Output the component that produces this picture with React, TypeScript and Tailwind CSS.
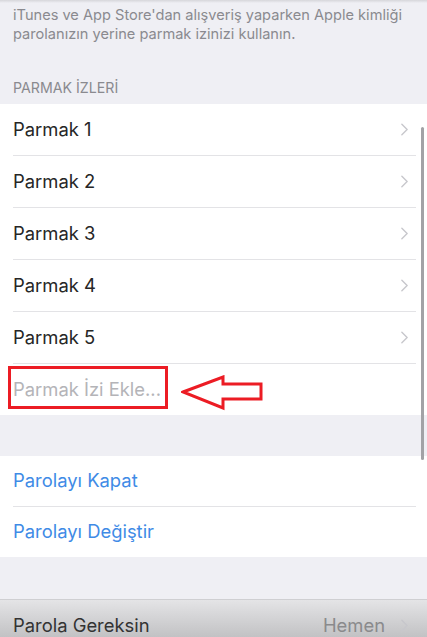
import { ReactNode } from 'react';

const font = { fontFamily: 'Inter, "Noto Sans", sans-serif' };

function Chevron({ className = '' }: { className?: string }) {
  return (
    <svg viewBox="0 0 8 14" className={`w-[7px] h-[13px] ${className}`} fill="none">
      <path d="M1 1l6 6-6 6" stroke="#c7c7cc" strokeWidth="1.6" strokeLinecap="round" strokeLinejoin="round" />
    </svg>
  );
}

function Row({ children, last = false, h = 'h-[52px]' }: { children: ReactNode; last?: boolean; h?: string }) {
  return (
    <div className={`${h} pl-[13px] flex`}>
      <div className={`flex-1 flex items-center mr-[11px] pr-[8px] ${last ? '' : 'border-b border-[#e3e3e6]'}`}>
        {children}
      </div>
    </div>
  );
}

export default function App() {
  const fingers = ['Parmak 1', 'Parmak 2', 'Parmak 3', 'Parmak 4', 'Parmak 5'];

  return (
    <div className="relative w-[427px] h-[637px] overflow-hidden bg-[#efeff4]" style={font}>
      <div className="h-[3px] bg-gradient-to-b from-[#d6d6da] to-[#efeff4]" />
      <div className="h-[101px] px-[13px] pt-[3px] flex flex-col">
        <p className="text-[14.6px] leading-[19px] text-[#8a8a8f]">
          iTunes ve App Store'dan alışveriş yaparken Apple kimliği parolanızın yerine parmak izinizi kullanın.
        </p>
        <p className="mt-auto mb-[8px] text-[14.2px] leading-[16px] text-[#8a8a8f]">PARMAK İZLERİ</p>
      </div>

      {/* fingerprints */}
      <div className="bg-white">
        {fingers.map((f) => (
          <Row key={f}>
            <span className="flex-1 text-[18.4px] text-[#262626]">{f}</span>
            <Chevron />
          </Row>
        ))}
        <div className="h-[51px] pl-[13px] flex items-center relative">
          <span className="text-[18.4px] text-[#b4b4b8]">Parmak İzi Ekle...</span>
          <div className="absolute left-[8px] top-[2px] w-[160px] h-[43px] border-[3px] border-[#ec1c24]" />
          <svg className="absolute left-[181px] top-[11px]" width="84" height="38" viewBox="0 0 84 38" fill="none">
            <path
              d="M2 17 L42 2 L42 9 L80 9 L80 24 L42 24 L42 33 Z"
              stroke="#ec1c24"
              strokeWidth="3"
              strokeLinejoin="miter"
            />
          </svg>
        </div>
      </div>

      <div className="h-[41px]" />

      {/* password */}
      <div className="bg-white">
        <Row h="h-[51px]">
          <span className="text-[18.4px] text-[#3f8be6]">Parolayı Kapat</span>
        </Row>
        <Row h="h-[50px]" last>
          <span className="text-[18.4px] text-[#3f8be6]">Parolayı Değiştir</span>
        </Row>
      </div>

      <div className="h-[42px]" />

      <div className="h-[38px] border-t border-[#cfcfd2] bg-gradient-to-b from-[#e4e4e6] to-[#c2c2c4] pl-[13px] pr-[19px] flex items-center pt-[14px]">
        <span className="flex-1 text-[18.4px] text-[#333333]">Parola Gereksin</span>
        <span className="text-[18.4px] text-[#8a8a8c] mr-[16px]">Hemen</span>
        <Chevron />
      </div>

      {/* scroll indicator */}
      <div className="absolute left-[421px] top-[127px] w-[3px] h-[333px] rounded-full bg-[#a2a2a6]" />
    </div>
  );
}
